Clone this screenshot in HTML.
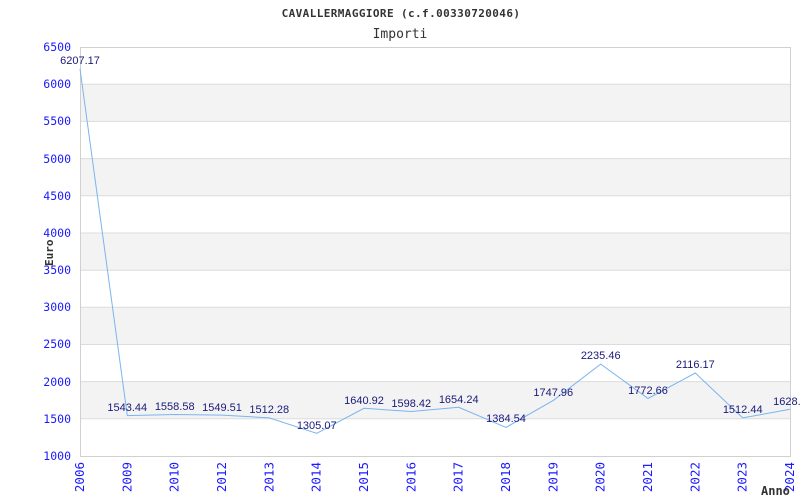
<!DOCTYPE html>
<html><head><meta charset="utf-8"><style>html,body{margin:0;padding:0;background:#fff}svg{display:block}</style></head><body>
<svg width="800" height="500" viewBox="0 0 800 500" xmlns="http://www.w3.org/2000/svg">
<rect width="800" height="500" fill="#fff"/>
<g fill="#f3f3f3">
<rect x="80" y="84.2" width="710" height="37.2"/>
<rect x="80" y="158.6" width="710" height="37.2"/>
<rect x="80" y="233" width="710" height="37.2"/>
<rect x="80" y="307.3" width="710" height="37.2"/>
<rect x="80" y="381.6" width="710" height="37.2"/>
</g>
<g stroke="#dcdcdc" stroke-width="1">
<line x1="80" y1="84.2" x2="790" y2="84.2"/><line x1="80" y1="121.4" x2="790" y2="121.4"/>
<line x1="80" y1="158.6" x2="790" y2="158.6"/><line x1="80" y1="195.8" x2="790" y2="195.8"/>
<line x1="80" y1="233" x2="790" y2="233"/><line x1="80" y1="270.2" x2="790" y2="270.2"/>
<line x1="80" y1="307.3" x2="790" y2="307.3"/><line x1="80" y1="344.5" x2="790" y2="344.5"/>
<line x1="80" y1="381.6" x2="790" y2="381.6"/><line x1="80" y1="418.8" x2="790" y2="418.8"/>
</g>
<rect x="80.5" y="47.5" width="710" height="409" fill="none" stroke="#d0d0d0"/>
<polyline fill="none" stroke="#7ab4f0" stroke-width="1" points="80,68.8 127.3,415.6 174.7,414.5 222,415.1 269.3,417.9 316.7,433.3 364,408.3 411.3,411.5 458.7,407.3 506,427.4 553.3,400.4 600.7,364.1 648,398.5 695.3,373 742.7,417.9 790,409.3"/>
<g font-family="'Liberation Sans',sans-serif" font-size="11" fill="#1a1a7a" text-anchor="middle">
<text x="80" y="64">6207.17</text>
<text x="127.3" y="411">1543.44</text>
<text x="174.7" y="410">1558.58</text>
<text x="222" y="411">1549.51</text>
<text x="269.3" y="413">1512.28</text>
<text x="316.7" y="429">1305.07</text>
<text x="364" y="404">1640.92</text>
<text x="411.3" y="407">1598.42</text>
<text x="458.7" y="403">1654.24</text>
<text x="506" y="422">1384.54</text>
<text x="553.3" y="396">1747.96</text>
<text x="600.7" y="359">2235.46</text>
<text x="648" y="394">1772.66</text>
<text x="695.3" y="368">2116.17</text>
<text x="742.7" y="413">1512.44</text>
<text x="790" y="405">1628.1</text>
</g>
<g font-family="'DejaVu Sans Mono',monospace" font-size="11.5" fill="#1a1aff" text-anchor="end">
<text x="71" y="51">6500</text><text x="71" y="88">6000</text><text x="71" y="125">5500</text>
<text x="71" y="163">5000</text><text x="71" y="200">4500</text><text x="71" y="237">4000</text>
<text x="71" y="274">3500</text><text x="71" y="311">3000</text><text x="71" y="348">2500</text>
<text x="71" y="386">2000</text><text x="71" y="423">1500</text><text x="71" y="460">1000</text>
</g>
<g font-family="'DejaVu Sans Mono',monospace" font-size="12.5" fill="#1a1aff" text-anchor="end">
<text transform="translate(84,462) rotate(-90)">2006</text>
<text transform="translate(131.3,462) rotate(-90)">2009</text>
<text transform="translate(178.7,462) rotate(-90)">2010</text>
<text transform="translate(226,462) rotate(-90)">2012</text>
<text transform="translate(273.3,462) rotate(-90)">2013</text>
<text transform="translate(320.7,462) rotate(-90)">2014</text>
<text transform="translate(368,462) rotate(-90)">2015</text>
<text transform="translate(415.3,462) rotate(-90)">2016</text>
<text transform="translate(462.7,462) rotate(-90)">2017</text>
<text transform="translate(510,462) rotate(-90)">2018</text>
<text transform="translate(557.3,462) rotate(-90)">2019</text>
<text transform="translate(604.7,462) rotate(-90)">2020</text>
<text transform="translate(652,462) rotate(-90)">2021</text>
<text transform="translate(699.3,462) rotate(-90)">2022</text>
<text transform="translate(746.7,462) rotate(-90)">2023</text>
<text transform="translate(794,462) rotate(-90)">2024</text>
</g>
<g font-family="'DejaVu Sans Mono',monospace" fill="#333">
<text x="401" y="17" font-size="11" font-weight="bold" text-anchor="middle" letter-spacing="0.4">CAVALLERMAGGIORE (c.f.00330720046)</text>
<text x="400" y="38" font-size="13" text-anchor="middle">Importi</text>
<text transform="translate(53,266) rotate(-90)" font-size="11" font-weight="bold">Euro</text>
<text x="761" y="495" font-size="12" font-weight="bold">Anno</text>
</g>
</svg>
</body></html>
